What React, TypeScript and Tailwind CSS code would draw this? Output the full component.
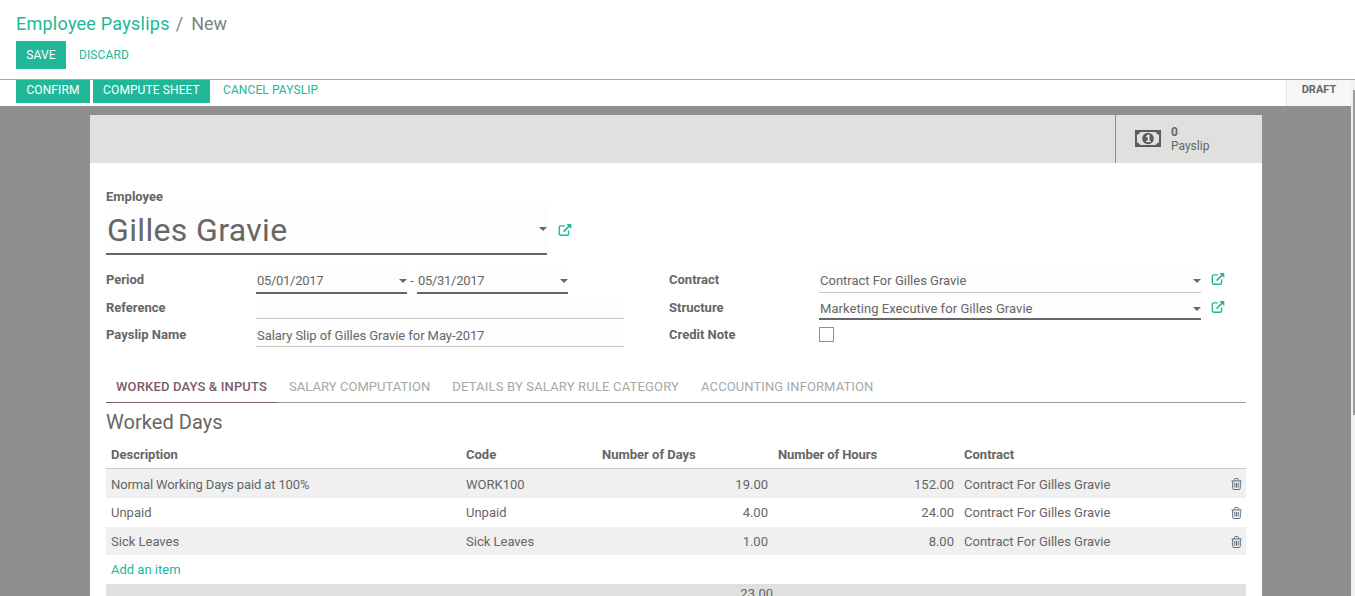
import React from "react";

const Ext = () => (
  <svg viewBox="0 0 14 14" className="w-[14px] h-[14px]" fill="none" stroke="#21b799" strokeWidth="1.4">
    <path d="M10.6 7.5v3.2a1.5 1.5 0 0 1-1.5 1.500H2.800a1.500 1.500 0 0 1-1.500-1.500V4.400a1.500 1.500 0 0 1 1.500-1.500h4" />
    <path d="M5.600 8.600 11.600 2.600" strokeWidth="1.7" />
    <path d="M8.300 1h5v5z" fill="#21b799" stroke="none" />
  </svg>
);

const Caret = () => (
  <span className="w-0 h-0 border-x-[4px] border-x-transparent border-t-[4px] border-t-[#666]" />
);

const Trash = () => (
  <svg viewBox="0 0 11 12" className="w-[11px] h-[12px]" fill="none" stroke="#5f6d7a" strokeWidth="1">
    <path d="M.5 2.900h10M3.600 2.700V1.500a1 1 0 0 1 1-1h1.800a1 1 0 0 1 1 1v1.200" />
    <path d="M1.700 3v7.300a1.200 1.200 0 0 0 1.200 1.200h5.200a1.200 1.200 0 0 0 1.200-1.200V3" />
    <path d="M3.800 4.800v4.900M5.500 4.800v4.900M7.200 4.800v4.900" />
  </svg>
);

const Money = () => (
  <svg viewBox="0 0 26 17" className="w-[26px] h-[17px]">
    <path fillRule="evenodd" fill="#5b5b5b" d="M0 0h26v17H0zM2 4.500v8a3 3 0 0 1 3 2.500h16a3 3 0 0 1 3-2.500v-8A3 3 0 0 1 21 2H5A3 3 0 0 1 2 4.500z" />
    <circle cx="13" cy="8.500" r="5.800" fill="#5b5b5b" />
    <path d="M10.800 6.200 13.300 4.500h1.200v6.300h1.300v1.300h-4.700v-1.300h1.600V6.600l-1.200.8z" fill="#efefed" />
  </svg>
);

const Label = ({ children }: { children: React.ReactNode }) => (
  <div className="text-[13px] leading-[18px] font-bold text-[#666]">{children}</div>
);

const rows = [
  ["Normal Working Days paid at 100%", "WORK100", "19.00", "152.00", "h-[30px] bg-[#eff0ef]", "pt-[2px]", "tracking-[-0.12px]"],
  ["Unpaid", "Unpaid", "4.00", "24.00", "h-[29px] bg-white", "", ""],
  ["Sick Leaves", "Sick Leaves", "1.00", "8.00", "h-[28px] bg-[#eff0ef]", "pt-[1px]", ""],
] as const;

export default function App() {
  return (
    <div className="relative h-[596px] overflow-hidden flex flex-col bg-white text-[13px] text-[#666] font-['Roboto',sans-serif]">
      <header className="h-[80px] shrink-0 border-b border-[#a9a9a9] px-4 pt-[13px]">
        <div className="text-[18px] leading-[22px] flex">
          <span className="text-[#21b799] tracking-[0.25px]">Employee Payslips</span>
          <span className="text-[#888] ml-[6px]">/</span>
          <span className="text-[#7c8580] ml-[8px]">New</span>
        </div>
        <div className="flex mt-[6px] text-[12px] tracking-[0.1px]">
          <button className="w-[50px] h-[28px] bg-[#21b799] text-white">SAVE</button>
          <button className="h-[28px] ml-[13px] text-[#21b799]">DISCARD</button>
        </div>
      </header>

      <div className="h-[26px] shrink-0 flex pl-4 text-[12px] tracking-[0.1px]">
        <button className="w-[74px] h-[23px] pb-[3px] bg-[#21b799] text-white">CONFIRM</button>
        <button className="w-[117px] h-[23px] pb-[3px] ml-[3px] bg-[#21b799] text-white">COMPUTE SHEET</button>
        <button className="h-[23px] pb-[3px] ml-[13px] text-[#21b799]">CANCEL PAYSLIP</button>
        <div className="ml-auto w-[69px] h-[26px] flex">
          <div className="w-[65px] bg-[#f6f6f6] border-l border-[#e4e4e4] pt-[2px] text-center text-[11px] leading-[15px] font-bold text-[#666] tracking-normal">
            DRAFT
          </div>
          <div className="w-[4px] bg-[#f1f1f1]" />
        </div>
      </div>

      <main className="flex-1 min-h-0 bg-[#8f8f8f] pl-[90px] pt-[9px] pr-[89px] border-r-[4px] border-r-[#f1f1f1] overflow-hidden">
        <div className="w-[1172px] bg-white">
          <div className="h-[48px] bg-[#e0e0de] flex justify-end">
            <div className="w-[147px] border-l border-[#8f8f8f] flex pl-[19px] pt-[10px]">
              <div className="pt-[5px]"><Money /></div>
              <div className="ml-[10px] text-[12px] leading-[14px] text-[#666]">
                <div className="font-bold">0</div>
                <div>Payslip</div>
              </div>
            </div>
          </div>

          <div className="px-4 pt-[25px]">
            <Label>Employee</Label>
            <div className="flex items-start -mt-[1px]">
              <div className="w-[441px] h-[50px] bg-[#fdfdfd] border-b-2 border-[#666] flex items-center justify-between pl-[1px]">
                <span className="text-[32px] leading-[50px] pt-[1px] text-[#666] tracking-[0.35px]">Gilles Gravie</span>
                <Caret />
              </div>
              <div className="ml-[11px] mt-[18px]"><Ext /></div>
            </div>

            <div className="flex mt-[15px]">
              <div className="w-[563px] shrink-0">
                <div className="flex h-[29px]">
                  <div className="w-[150px] pt-[1px]"><Label>Period</Label></div>
                  <div className="w-[151px] h-[24px] bg-[#fdfdfd] border-b-2 border-[#666] flex items-center justify-between pl-[1px]">
                    <span className="tracking-[-0.3px]">05/01/2017</span><Caret />
                  </div>
                  <span className="w-[10px] pl-[3px] leading-[22px]">-</span>
                  <div className="w-[151px] h-[24px] bg-[#fdfdfd] border-b-2 border-[#666] flex items-center justify-between pl-[1px]">
                    <span className="tracking-[-0.3px]">05/31/2017</span><Caret />
                  </div>
                </div>
                <div className="flex h-[27px]">
                  <div className="w-[150px]"><Label>Reference</Label></div>
                  <div className="w-[368px] h-[20px] bg-[#fdfdfd] border-b border-[#c8c8c8]" />
                </div>
                <div className="flex h-[28px]">
                  <div className="w-[150px]"><Label>Payslip Name</Label></div>
                  <div className="w-[368px] h-[21px] bg-[#fdfdfd] border-b border-[#c8c8c8] pl-[1px] leading-[20px] tracking-[-0.07px]">
                    Salary Slip of Gilles Gravie for May-2017
                  </div>
                </div>
              </div>
              <div className="flex-1">
                <div className="flex h-[29px]">
                  <div className="w-[150px] pt-[1px]"><Label>Contract</Label></div>
                  <div className="w-[382px] h-[23px] bg-[#fdfdfd] border-b border-[#c8c8c8] flex items-center justify-between pl-[1px]">
                    <span>Contract For Gilles Gravie</span><Caret />
                  </div>
                  <div className="ml-[10px] pt-[2px]"><Ext /></div>
                </div>
                <div className="flex h-[27px]">
                  <div className="w-[150px]"><Label>Structure</Label></div>
                  <div className="w-[382px] h-[21px] bg-[#fdfdfd] border-b-2 border-[#666] flex items-center justify-between pl-[1px]">
                    <span className="tracking-[0.05px]">Marketing Executive for Gilles Gravie</span><Caret />
                  </div>
                  <div className="ml-[10px] pt-[1px]"><Ext /></div>
                </div>
                <div className="flex h-[28px]">
                  <div className="w-[150px]"><Label>Credit Note</Label></div>
                  <div className="w-[15px] h-[15px] mt-[1px] border border-[#8f8f8f] bg-white" />
                </div>
              </div>
            </div>

            <div className="flex h-[27px] mt-[22px] border-b border-[#999] text-[13px] leading-[21px]">
              <div className="w-[171px] h-[27px] -mb-px border-b border-[#7c5a6b] pl-[10px] font-medium text-[#7c5a6b] tracking-[0.15px]">WORKED DAYS &amp; INPUTS</div>
              <div className="ml-[12px] text-[#a4a9a6] tracking-[0.05px]">SALARY COMPUTATION</div>
              <div className="ml-[22px] text-[#a4a9a6] tracking-[0.18px]">DETAILS BY SALARY RULE CATEGORY</div>
              <div className="ml-[22px] text-[#a4a9a6] tracking-[0.1px]">ACCOUNTING INFORMATION</div>
            </div>

            <h2 className="text-[20px] leading-[24px] mt-[7px] text-[#666] tracking-[0.05px]">Worked Days</h2>

            <table className="w-[1140px] table-fixed mt-[8px] border-collapse">
              <colgroup>
                <col className="w-[355px]" />
                <col className="w-[136px]" />
                <col className="w-[176px]" />
                <col className="w-[186px]" />
                <col />
                <col className="w-[30px]" />
              </colgroup>
              <thead>
                <tr className="h-[26px] border-b border-[#c9c9c9] text-left font-bold">
                  <th className="px-[5px]">Description</th>
                  <th className="px-[5px]">Code</th>
                  <th className="px-[5px]">Number of Days</th>
                  <th className="px-[5px] tracking-[-0.1px]">Number of Hours</th>
                  <th className="px-[5px]">Contract</th>
                  <th />
                </tr>
              </thead>
              <tbody>
                {rows.map((r) => (
                  <tr key={r[0]} className={r[4]}>
                    <td className={`px-[5px] ${r[5]} ${r[6]}`}>{r[0]}</td>
                    <td className={`px-[5px] ${r[5]}`}>{r[1]}</td>
                    <td className={`px-[5px] text-right ${r[5]}`}>{r[2]}</td>
                    <td className={`px-[5px] text-right ${r[5]}`}>{r[3]}</td>
                    <td className={`px-[5px] ${r[5]}`}>Contract For Gilles Gravie</td>
                    <td className={`pl-[15px] ${r[5]}`}><div className="flex"><Trash /></div></td>
                  </tr>
                ))}
                <tr className="h-[29px]">
                  <td className="px-[5px] text-[#21b799]" colSpan={6}>Add an item</td>
                </tr>
                <tr className="h-[28px] bg-[#e0e0de] align-top">
                  <td colSpan={2} />
                  <td className="text-right">23.00</td>
                  <td colSpan={3} />
                </tr>
              </tbody>
            </table>
          </div>
        </div>
      </main>

      <div className="absolute right-0 top-[90px] w-[2px] h-[325px] bg-[#9a9a9a]" />
    </div>
  );
}
